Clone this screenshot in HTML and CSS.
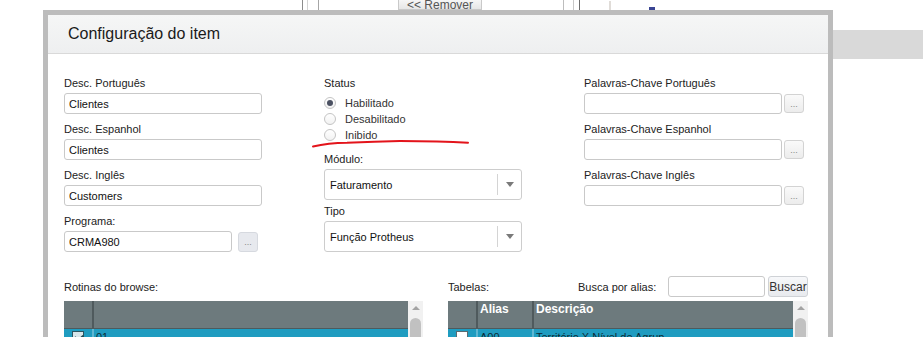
FILE: index.html
```html
<!DOCTYPE html>
<html lang="pt-BR">
<head>
  <meta charset="UTF-8" />
  <title>Configuração do item</title>
  <link rel="stylesheet" href="styles.css">
</head>
<body>
  <!-- page behind the modal -->
  <div class="backdrop">
    <div class="strip">
      <span class="vline l1"></span>
      <span class="vline l2"></span>
      <span class="vline l3"></span>
      <button class="old-btn">&lt;&lt; <u>R</u>emover</button>
      <span class="vline l4"></span>
      <span class="vline l5"></span>
      <span class="vline l6"></span>
      <span class="vline l7"></span>
      <span class="blue-mark"></span>
    </div>
    <div class="band"></div>
  </div>

  <div class="dialog">
    <div class="dialog-head">Configuração do item</div>
    <div class="dialog-body">
      <div class="form-grid">
        <div class="col">
          <div class="field">
            <label>Desc. Português</label>
            <input class="txt" value="Clientes">
          </div>
          <div class="field">
            <label>Desc. Espanhol</label>
            <input class="txt" value="Clientes">
          </div>
          <div class="field">
            <label>Desc. Inglês</label>
            <input class="txt" value="Customers">
          </div>
          <div class="field">
            <label>Programa:</label>
            <div class="with-btn">
              <input class="txt short" value="CRMA980">
              <button class="dots wide">...</button>
            </div>
          </div>
        </div>

        <div class="col">
          <label class="lbl">Status</label>
          <div class="radios">
            <div class="radio"><span class="dot on"></span>Habilitado</div>
            <div class="radio"><span class="dot"></span>Desabilitado</div>
            <div class="radio"><span class="dot"></span>Inibido</div>
          </div>
          <label class="lbl">Módulo:</label>
          <div class="select">
            <span class="sel-text">Faturamento</span>
            <span class="sel-arrow"></span>
          </div>
          <label class="lbl">Tipo</label>
          <div class="select">
            <span class="sel-text">Função Protheus</span>
            <span class="sel-arrow"></span>
          </div>
        </div>

        <div class="col">
          <div class="field">
            <label>Palavras-Chave Português</label>
            <div class="with-btn">
              <input class="txt" value="">
              <button class="dots">...</button>
            </div>
          </div>
          <div class="field">
            <label>Palavras-Chave Espanhol</label>
            <div class="with-btn">
              <input class="txt" value="">
              <button class="dots">...</button>
            </div>
          </div>
          <div class="field">
            <label>Palavras-Chave Inglês</label>
            <div class="with-btn">
              <input class="txt" value="">
              <button class="dots">...</button>
            </div>
          </div>
        </div>
      </div>

      <div class="lists">
        <div class="list-left">
          <div class="toolbar">Rotinas do browse:</div>
          <div class="grid-wrap">
            <div class="grid">
              <div class="g-head">
                <div class="c-chk"></div>
                <div class="c-rest"></div>
              </div>
              <div class="g-row">
                <div class="c-chk"><span class="chk checked"></span></div>
                <div class="c-rest">01</div>
              </div>
            </div>
            <div class="scroll"><span class="up"></span><span class="thumb"></span></div>
          </div>
        </div>

        <div class="list-right">
          <div class="toolbar">
            <span class="tab-lbl">Tabelas:</span>
            <span class="search-lbl">Busca por alias:</span>
            <input class="txt search" value="">
            <button class="btn-buscar">Buscar</button>
          </div>
          <div class="grid-wrap">
            <div class="grid wide-grid">
              <div class="g-head">
                <div class="c-chk"></div>
                <div class="c-alias">Alias</div>
                <div class="c-desc">Descrição</div>
              </div>
              <div class="g-row">
                <div class="c-chk"><span class="chk"></span></div>
                <div class="c-alias">A00</div>
                <div class="c-desc">Território X Nível de Agrup.</div>
              </div>
            </div>
            <div class="scroll"><span class="up"></span><span class="thumb"></span></div>
          </div>
        </div>
      </div>
    </div>
  </div>

  <!-- hand drawn red mark -->
  <svg class="mark" width="923" height="337" viewBox="0 0 923 337">
    <path d="M313 146.5 Q 328 143 347 142.7 Q 375 141.5 400 141 Q 440 141 468 142.7" fill="none" stroke="#e3141b" stroke-width="2" stroke-linecap="round"/>
  </svg>
</body>
</html>
```

FILE: styles.css
```css
body {
  margin: 0;
  font-family: "Liberation Sans", Arial, sans-serif;
  font-size: 11px;
  color: #222;
  background: #fff;
  width: 923px;
  height: 337px;
  overflow: hidden;
  position: relative;
}

/* background page */
.strip {
  display: flex;
  height: 10px;
}
.vline {
  width: 1px;
  height: 10px;
  background: #8c8c8c;
}
.l1 { margin-left: 302px; }
.l2 { margin-left: 4px; background: #d4d4d4; }
.l3 { margin-left: 10px; background: #a6a6a6; }
.l4 { margin-left: 81px; background: #bdbdbd; }
.l5 { margin-left: 9px; background: #c8c8c8; }
.l6 { margin-left: 5px; background: #6d6d6d; }
.l7 { margin-left: 29px; margin-top: 1px; background: #e0dcd8; width: 2px; }
.old-btn {
  margin-left: 79px;
  width: 84px;
  height: 10px;
  border: 1px solid #c9c9c9;
  border-top: 0;
  background: linear-gradient(#f6f6f6, #e6e6e6);
  font-family: "Liberation Sans", Arial, sans-serif;
  font-size: 12px;
  color: #555;
  line-height: 6px;
  padding: 0;
  overflow: hidden;
}
.blue-mark {
  margin-left: 38px;
  margin-top: 7px;
  width: 6px;
  height: 3px;
  background: #3a4593;
}
.band {
  margin: 20px 0 0 833px;
  height: 29px;
  background: #d9d9d9;
}

/* modal */
.dialog {
  position: absolute;
  left: 43px;
  top: 10px;
  width: 780px;
  height: 400px;
  border: 5px solid #bcbcbc;
  background: #fff;
}
.dialog-head {
  height: 38px;
  line-height: 38px;
  padding-left: 20px;
  font-size: 16px;
  color: #1a1a1a;
  background: linear-gradient(#f5f6f6, #eeeff0);
  border-bottom: 1px solid #d9d9d9;
}
.dialog-body {
  padding: 22px 0 0 16px;
}

.form-grid {
  display: grid;
  grid-template-columns: 260px 260px 260px;
}
.field {
  margin-bottom: 8px;
}
.field label,
.lbl {
  display: block;
  height: 14px;
  line-height: 14px;
  margin-bottom: 3px;
}
.txt {
  display: block;
  box-sizing: border-box;
  width: 198px;
  height: 21px;
  border: 1px solid #c9c9c9;
  border-radius: 3px;
  padding: 0 0 0 4px;
  font-family: "Liberation Sans", Arial, sans-serif;
  font-size: 11px;
  color: #111;
  outline: none;
}
.txt.short { width: 168px; }
.with-btn {
  display: flex;
  align-items: center;
  height: 21px;
}
.dots {
  box-sizing: border-box;
  margin-left: 2px;
  width: 20px;
  height: 19px;
  border: 1px solid #d3d3d3;
  border-radius: 3px;
  background: linear-gradient(#fafafa, #ececec);
  color: #888;
  font-size: 9px;
  padding: 0;
  line-height: 14px;
}
.dots.wide {
  margin-left: 6px;
  height: 20px;
  background: #e7e9ee;
  border-color: #d6d9df;
}

/* radios */
.radios {
  margin: 5px 0 9px;
}
.radio {
  display: flex;
  align-items: center;
  height: 16px;
  color: #333;
}
.dot {
  box-sizing: border-box;
  width: 12px;
  height: 12px;
  margin-right: 9px;
  border: 1px solid #c4c4c4;
  border-radius: 50%;
  background: linear-gradient(#fff, #f2f2f2);
  display: flex;
  align-items: center;
  justify-content: center;
}
.dot.on::after {
  content: "";
  width: 6px;
  height: 6px;
  border-radius: 50%;
  background: #4b5162;
}

/* selects */
.select {
  box-sizing: border-box;
  width: 198px;
  height: 31px;
  border: 1px solid #cdcdcd;
  border-radius: 3px;
  display: flex;
  align-items: center;
  margin-bottom: 4px;
}
.sel-text {
  flex: 1;
  padding-left: 5px;
  color: #111;
}
.sel-arrow {
  width: 23px;
  height: 21px;
  border-left: 1px solid #d4d4d4;
  display: flex;
  align-items: center;
  justify-content: center;
}
.sel-arrow::after {
  content: "";
  border-left: 4px solid transparent;
  border-right: 4px solid transparent;
  border-top: 5px solid #7a7a7a;
}

/* bottom lists */
.lists {
  display: grid;
  grid-template-columns: 384px 360px;
  margin-top: 16px;
}
.toolbar {
  display: flex;
  align-items: center;
  height: 21px;
  margin-bottom: 4px;
}
.tab-lbl { width: 130px; }
.search-lbl { width: 90px; }
.txt.search { width: 97px; }
.btn-buscar {
  box-sizing: border-box;
  margin-left: 3px;
  width: 40px;
  height: 21px;
  border: 1px solid #cfd2d6;
  border-radius: 3px;
  background: linear-gradient(#f7f8fa, #e8eaee);
  font-family: "Liberation Sans", Arial, sans-serif;
  font-size: 12px;
  color: #333;
  padding: 0;
}
.grid-wrap {
  display: flex;
  height: 60px;
}
.grid {
  width: 344px;
}
.wide-grid {
  width: 345px;
}
.g-head {
  display: flex;
  height: 27px;
  background: #6d7a7d;
  border-bottom: 1px solid #4e5a5d;
  color: #fff;
  font-weight: bold;
  font-size: 12px;
}
.g-row {
  display: flex;
  height: 20px;
  background: #1f9cc0;
  color: #0d2c36;
}
.c-chk {
  width: 28px;
  border-right: 2px solid #4f5a5d;
  display: flex;
  justify-content: center;
  padding-top: 1px;
}
.g-row .c-chk,
.g-row .c-alias { border-right-color: #5fb7d2; }
.c-rest,
.c-alias,
.c-desc {
  padding: 1px 0 0 2px;
}
.g-row .c-rest,
.g-row .c-alias,
.g-row .c-desc { padding-top: 2px; }
.c-rest { flex: 1; }
.c-alias {
  width: 52px;
  border-right: 2px solid #4f5a5d;
}
.c-desc { flex: 1; }
.chk {
  box-sizing: border-box;
  width: 12px;
  height: 12px;
  border: 1px solid #5a6a70;
  background: #fff;
  margin-top: 1px;
}
.chk.checked {
  background: #d8e6ea;
  border-color: #2d5560;
  position: relative;
}
.chk.checked::after {
  content: "";
  position: absolute;
  left: 3px;
  top: 1px;
  width: 4px;
  height: 6px;
  border: solid #1e4a55;
  border-width: 0 2px 2px 0;
  transform: rotate(45deg);
}
.scroll {
  width: 15px;
  background: #f1f1f1;
  display: flex;
  flex-direction: column;
  align-items: center;
}
.up {
  margin-top: 5px;
  border-left: 4px solid transparent;
  border-right: 4px solid transparent;
  border-bottom: 4px solid #a3a3a3;
}
.thumb {
  margin-top: 8px;
  width: 11px;
  height: 40px;
  border-radius: 6px;
  background: #c1c1c1;
}

.mark {
  position: absolute;
  left: 0;
  top: 0;
  pointer-events: none;
}
```
